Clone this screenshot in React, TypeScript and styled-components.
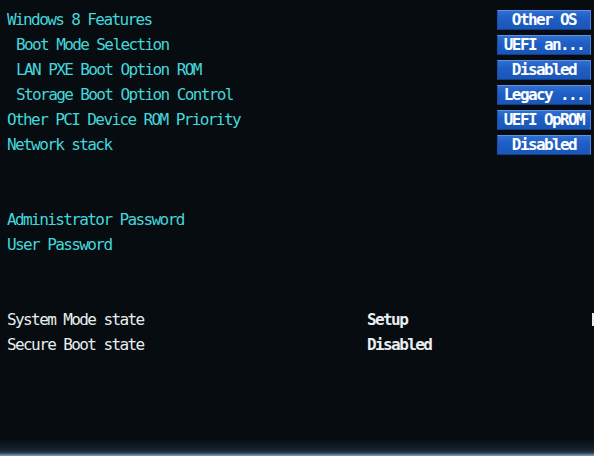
import React from 'react';
import styled, { createGlobalStyle } from 'styled-components';

const GlobalStyle = createGlobalStyle`
  html, body {
    margin: 0;
    padding: 0;
    background: #060c0f;
  }
`;

const Screen = styled.div`
  width: 594px;
  height: 456px;
  overflow: hidden;
  display: flex;
  flex-direction: column;
  background: linear-gradient(
    to bottom,
    #060c0f 0,
    #060c0f 438px,
    #0f1a24 446px,
    #1a2838 451px,
    #2e4256 453px,
    #6a8298 455px,
    #8aa0b4 456px
  );
  font-family: 'DejaVu Sans Mono', 'Liberation Mono', monospace;
  font-size: 16px;
  letter-spacing: -1.6px;
  padding-top: 7px;
  box-sizing: border-box;
`;

const Row = styled.div<{ $indent?: boolean }>`
  height: 25px;
  display: flex;
  align-items: center;
  padding-left: ${(p) => (p.$indent ? '16px' : '7px')};
`;

const Label = styled.span<{ $white?: boolean }>`
  color: ${(p) => (p.$white ? '#e8eef0' : '#45d6dc')};
  width: ${(p) => (p.$white ? '360px' : 'auto')};
  white-space: pre;
`;

const Value = styled.span`
  color: #e8eef0;
  font-weight: bold;
  white-space: pre;
`;

const Spacer = styled.div`
  flex: 1;
`;

const OptionButton = styled.div`
  width: 94px;
  height: 20px;
  margin-right: 3px;
  box-sizing: border-box;
  display: flex;
  align-items: center;
  justify-content: center;
  color: #ffffff;
  font-weight: bold;
  background: linear-gradient(to bottom, #2f6fd2 0%, #1f5ec4 40%, #1a56b8 100%);
  border-top: 1px solid #5e92e6;
  border-right: 1px solid #4f84dc;
  border-bottom: 1px solid #123f8a;
  border-left: 1px solid #1a4fa8;
  white-space: pre;
`;

const EdgeMark = styled.span`
  width: 2px;
  height: 13px;
  background: #e8eef0;
`;

type Item = { label: string; value: string; indent?: boolean };

const options: Item[] = [
  { label: 'Windows 8 Features', value: 'Other OS' },
  { label: 'Boot Mode Selection', value: 'UEFI an...', indent: true },
  { label: 'LAN PXE Boot Option ROM', value: 'Disabled', indent: true },
  { label: 'Storage Boot Option Control', value: 'Legacy ...', indent: true },
  { label: 'Other PCI Device ROM Priority', value: 'UEFI OpROM' },
  { label: 'Network stack', value: 'Disabled' },
];

const App = () => {
  return (
    <>
      <GlobalStyle />
      <Screen>
        {options.map((o) => (
          <Row key={o.label} $indent={o.indent}>
            <Label>{o.label}</Label>
            <Spacer />
            <OptionButton>{o.value}</OptionButton>
          </Row>
        ))}
        <Row />
        <Row />
        <Row>
          <Label>Administrator Password</Label>
        </Row>
        <Row>
          <Label>User Password</Label>
        </Row>
        <Row />
        <Row />
        <Row>
          <Label $white>System Mode state</Label>
          <Value>Setup</Value>
          <Spacer />
          <EdgeMark />
        </Row>
        <Row>
          <Label $white>Secure Boot state</Label>
          <Value>Disabled</Value>
        </Row>
      </Screen>
    </>
  );
};

export default App;
